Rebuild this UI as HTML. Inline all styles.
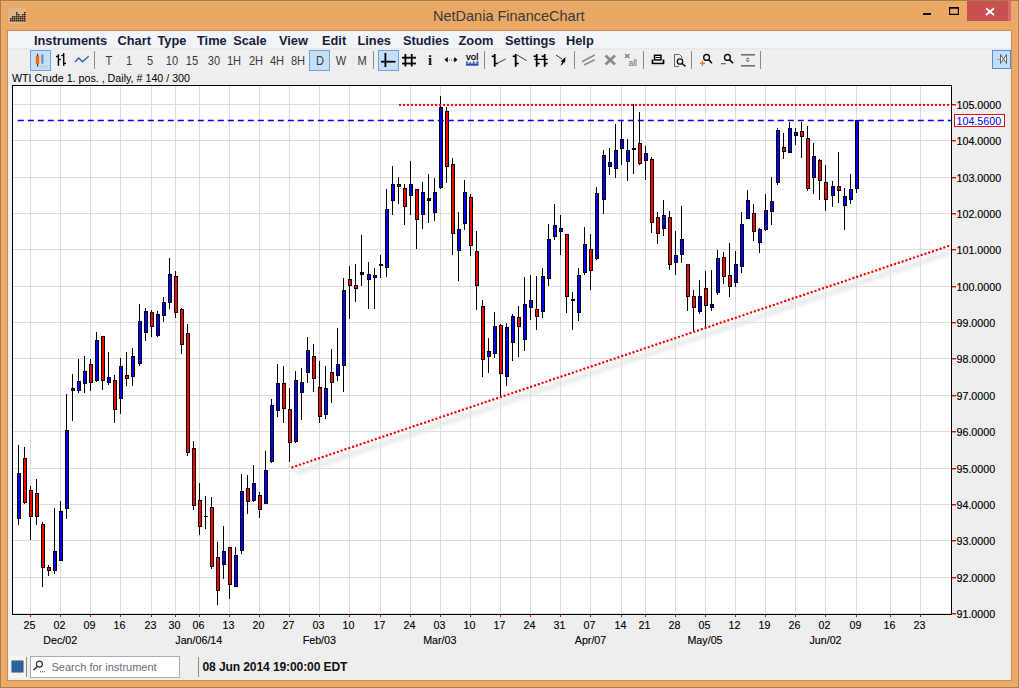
<!DOCTYPE html>
<html><head><meta charset="utf-8"><style>
html,body{margin:0;padding:0}
body{width:1019px;height:688px;position:relative;overflow:hidden;background:#EAA866;font-family:'Liberation Sans', sans-serif}
.a{position:absolute}
.menu span{position:absolute;top:3px;font-size:12.8px;font-weight:bold;color:#1B1B3A;white-space:nowrap}
.tb span{position:absolute;top:2.5px;font-size:13.5px;color:#3A3A3A;white-space:nowrap;transform:translateX(-50%) scaleX(0.82)}
</style></head><body>
<div class="a" style="left:0;top:0;width:1019px;height:688px;box-sizing:border-box;border:1px solid #AE7B48"></div>
<div class="a" style="left:1px;top:1px;width:1017px;height:686px;box-sizing:border-box;border:1px solid #E6AE74"></div>
<div class="a" style="left:2px;top:30px;width:2px;height:654px;background:#F0AE6A"></div>
<div class="a" style="left:1013px;top:30px;width:2px;height:654px;background:#F2A85E"></div>
<div class="a" style="left:2px;top:684px;width:1015px;height:2px;background:#F0AC66"></div>
<div class="a" style="left:7px;top:30px;width:1005px;height:651px;background:#CB8D55"></div>
<div class="a" style="left:2px;top:4px;width:1015px;height:1px;background:#EEB06C;opacity:0.6"></div>
<div class="a" style="left:2px;top:24px;width:965px;height:1px;background:#F0AC62;opacity:0.6"></div>
<div class="a" style="left:2px;top:27px;width:1015px;height:1px;background:#F2B26A;opacity:0.6"></div>
<div class="a" style="left:433px;top:8px;font-size:14.5px;color:#3A3A3A;white-space:nowrap">NetDania FinanceChart</div>
<div class="a" style="left:967px;top:1px;width:44px;height:20px;background:#D86A6A"></div><div class="a" style="left:967px;top:1px;width:41px;height:20px;background:#C75050"></div>
<svg class="a" style="left:0;top:0" width="1019" height="30">
<rect x="923" y="13" width="8" height="2" fill="#000"/>
<rect x="949.6" y="7.6" width="8.8" height="6.8" fill="none" stroke="#000" stroke-width="1.2"/>
<rect x="949" y="7" width="10" height="1.6" fill="#000"/>
<path d="M986 8.3 L994 15 M994 8.3 L986 15" stroke="#fff" stroke-width="1.9"/>
<rect x="8" y="8" width="1.5" height="1.5" fill="#C8D0D8" opacity="0.6"/>
<rect x="10" y="8" width="1.5" height="1.5" fill="#C8D0D8" opacity="0.6"/>
<rect x="12" y="8" width="1.5" height="1.5" fill="#C8D0D8" opacity="0.6"/>
<rect x="14" y="8" width="1.5" height="1.5" fill="#C8D0D8" opacity="0.6"/>
<rect x="16" y="8" width="1.5" height="1.5" fill="#C8D0D8" opacity="0.6"/>
<rect x="18" y="8" width="1.5" height="1.5" fill="#C8D0D8" opacity="0.6"/>
<rect x="20" y="8" width="1.5" height="1.5" fill="#C8D0D8" opacity="0.6"/>
<rect x="22" y="8" width="1.5" height="1.5" fill="#C8D0D8" opacity="0.6"/>
<rect x="24" y="8" width="1.5" height="1.5" fill="#C8D0D8" opacity="0.6"/>
<rect x="8" y="10" width="1.5" height="1.5" fill="#C8D0D8" opacity="0.6"/>
<rect x="10" y="10" width="1.5" height="1.5" fill="#C8D0D8" opacity="0.6"/>
<rect x="12" y="10" width="1.5" height="1.5" fill="#C8D0D8" opacity="0.6"/>
<rect x="14" y="10" width="1.5" height="1.5" fill="#C8D0D8" opacity="0.6"/>
<rect x="16" y="10" width="1.5" height="1.5" fill="#C8D0D8" opacity="0.6"/>
<rect x="18" y="10" width="1.5" height="1.5" fill="#C8D0D8" opacity="0.6"/>
<rect x="20" y="10" width="1.5" height="1.5" fill="#C8D0D8" opacity="0.6"/>
<rect x="22" y="10" width="1.5" height="1.5" fill="#C8D0D8" opacity="0.6"/>
<rect x="24" y="10" width="1.5" height="1.5" fill="#C8D0D8" opacity="0.6"/>
<rect x="8" y="12" width="1.5" height="1.5" fill="#C8D0D8" opacity="0.6"/>
<rect x="10" y="12" width="1.5" height="1.5" fill="#C8D0D8" opacity="0.6"/>
<rect x="12" y="12" width="1.5" height="1.5" fill="#C8D0D8" opacity="0.6"/>
<rect x="14" y="12" width="1.5" height="1.5" fill="#C8D0D8" opacity="0.6"/>
<rect x="16" y="12" width="1.5" height="1.5" fill="#1A2030"/>
<rect x="18" y="12" width="1.5" height="1.5" fill="#C8D0D8" opacity="0.6"/>
<rect x="20" y="12" width="1.5" height="1.5" fill="#C8D0D8" opacity="0.6"/>
<rect x="22" y="12" width="1.5" height="1.5" fill="#C8D0D8" opacity="0.6"/>
<rect x="24" y="12" width="1.5" height="1.5" fill="#1A2030"/>
<rect x="8" y="14" width="1.5" height="1.5" fill="#C8D0D8" opacity="0.6"/>
<rect x="10" y="14" width="1.5" height="1.5" fill="#C8D0D8" opacity="0.6"/>
<rect x="12" y="14" width="1.5" height="1.5" fill="#C8D0D8" opacity="0.6"/>
<rect x="14" y="14" width="1.5" height="1.5" fill="#C8D0D8" opacity="0.6"/>
<rect x="16" y="14" width="1.5" height="1.5" fill="#1A2030"/>
<rect x="18" y="14" width="1.5" height="1.5" fill="#1A2030"/>
<rect x="20" y="14" width="1.5" height="1.5" fill="#C8D0D8" opacity="0.6"/>
<rect x="22" y="14" width="1.5" height="1.5" fill="#1A2030"/>
<rect x="24" y="14" width="1.5" height="1.5" fill="#1A2030"/>
<rect x="8" y="16" width="1.5" height="1.5" fill="#C8D0D8" opacity="0.6"/>
<rect x="10" y="16" width="1.5" height="1.5" fill="#C8D0D8" opacity="0.6"/>
<rect x="12" y="16" width="1.5" height="1.5" fill="#1A2030"/>
<rect x="14" y="16" width="1.5" height="1.5" fill="#1A2030"/>
<rect x="16" y="16" width="1.5" height="1.5" fill="#1A2030"/>
<rect x="18" y="16" width="1.5" height="1.5" fill="#1A2030"/>
<rect x="20" y="16" width="1.5" height="1.5" fill="#1A2030"/>
<rect x="22" y="16" width="1.5" height="1.5" fill="#1A2030"/>
<rect x="24" y="16" width="1.5" height="1.5" fill="#1A2030"/>
<rect x="8" y="18" width="1.5" height="1.5" fill="#C8D0D8" opacity="0.6"/>
<rect x="10" y="18" width="1.5" height="1.5" fill="#1A2030"/>
<rect x="12" y="18" width="1.5" height="1.5" fill="#1A2030"/>
<rect x="14" y="18" width="1.5" height="1.5" fill="#1A2030"/>
<rect x="16" y="18" width="1.5" height="1.5" fill="#1A2030"/>
<rect x="18" y="18" width="1.5" height="1.5" fill="#1A2030"/>
<rect x="20" y="18" width="1.5" height="1.5" fill="#1A2030"/>
<rect x="22" y="18" width="1.5" height="1.5" fill="#1A2030"/>
<rect x="24" y="18" width="1.5" height="1.5" fill="#1A2030"/>
<rect x="8" y="20" width="1.5" height="1.5" fill="#C8D0D8" opacity="0.6"/>
<rect x="10" y="20" width="1.5" height="1.5" fill="#1A2030"/>
<rect x="12" y="20" width="1.5" height="1.5" fill="#1A2030"/>
<rect x="14" y="20" width="1.5" height="1.5" fill="#1A2030"/>
<rect x="16" y="20" width="1.5" height="1.5" fill="#1A2030"/>
<rect x="18" y="20" width="1.5" height="1.5" fill="#1A2030"/>
<rect x="20" y="20" width="1.5" height="1.5" fill="#1A2030"/>
<rect x="22" y="20" width="1.5" height="1.5" fill="#1A2030"/>
<rect x="24" y="20" width="1.5" height="1.5" fill="#1A2030"/>
<rect x="8" y="22" width="1.5" height="1.5" fill="#C8D0D8" opacity="0.6"/>
<rect x="10" y="22" width="1.5" height="1.5" fill="#C8D0D8" opacity="0.6"/>
<rect x="12" y="22" width="1.5" height="1.5" fill="#C8D0D8" opacity="0.6"/>
<rect x="14" y="22" width="1.5" height="1.5" fill="#C8D0D8" opacity="0.6"/>
<rect x="16" y="22" width="1.5" height="1.5" fill="#C8D0D8" opacity="0.6"/>
<rect x="18" y="22" width="1.5" height="1.5" fill="#C8D0D8" opacity="0.6"/>
<rect x="20" y="22" width="1.5" height="1.5" fill="#C8D0D8" opacity="0.6"/>
<rect x="22" y="22" width="1.5" height="1.5" fill="#C8D0D8" opacity="0.6"/>
<rect x="24" y="22" width="1.5" height="1.5" fill="#C8D0D8" opacity="0.6"/>
</svg>
<div class="a" style="left:8px;top:31px;width:1003px;height:649px;background:#EEEEEE"></div>
<div class="a" style="left:8px;top:31px;width:1003px;height:17px;background:#F1F4F8"></div>
<div class="a" style="left:8px;top:48px;width:1003px;height:2px;background:#EAEAEA"></div>
<div class="a" style="left:8px;top:50px;width:1003px;height:22px;background:#EFEFEF"></div>
<div class="a menu" style="left:0;top:30px;width:1019px;height:20px">
<span style="left:34px">Instruments</span>
<span style="left:117.5px">Chart<b style="display:inline-block;width:3px"></b> Type</span>
<span style="left:197px">Time<b style="display:inline-block;width:3px"></b> Scale</span>
<span style="left:279px">View</span>
<span style="left:322px">Edit</span>
<span style="left:357.5px">Lines</span>
<span style="left:403px">Studies</span>
<span style="left:458.5px">Zoom</span>
<span style="left:505px">Settings</span>
<span style="left:566px">Help</span>
</div>
<svg class="a" style="left:0;top:0;font-family:'Liberation Sans', sans-serif" width="1019" height="80">
<rect x="30.5" y="50.5" width="20" height="20" fill="#C4DFF8" stroke="#6EA2DC" stroke-width="1"/>
<rect x="309.5" y="50.5" width="20" height="20" fill="#C4DFF8" stroke="#6EA2DC" stroke-width="1"/>
<rect x="378.5" y="50.5" width="20" height="20" fill="#C4DFF8" stroke="#6EA2DC" stroke-width="1"/>
<rect x="992.5" y="50.5" width="18" height="18" fill="#C2DDF8" stroke="#4F8FDC" stroke-width="1"/>
<path d="M1000.5 54.5 L1006.5 63.5 L1006.5 54.5 L1000.5 63.5 Z" fill="#F4F4F0" stroke="#666" stroke-width="1"/>
<rect x="997" y="59" width="3" height="1" fill="#8AA"/>
<rect x="37" y="53.8" width="1.2" height="12.8" fill="#6A2A10"/>
<rect x="35.8" y="55.8" width="3.4" height="8.1" fill="#FF6600"/>
<path d="M41 54.5 L43.7 54.5 L43.5 63.7 L41.2 63.7 Z" fill="#7896B8"/>
<rect x="39.9" y="65" width="8" height="1.5" fill="#B8E0C8"/>
<rect x="39.9" y="66.5" width="8" height="1.7" fill="#C8C8F0"/>
<g fill="#000"><rect x="57.7" y="54.2" width="1.4" height="11.6"/><rect x="56" y="55.8" width="2" height="1.4"/><rect x="58.8" y="58.8" width="2" height="1.4"/><rect x="63" y="53" width="1.4" height="12.8"/><rect x="61.3" y="54.8" width="2" height="1.4"/><rect x="64" y="62.7" width="2" height="1.4"/></g>
<polyline points="75,62 78.7,58 82.4,61.7 88.7,56.3" fill="none" stroke="#3A5CC0" stroke-width="1.4"/>
<rect x="94" y="51" width="1" height="18" fill="#8A8A8A"/>
<rect x="373" y="51" width="1" height="18" fill="#8A8A8A"/>
<rect x="484" y="51" width="1" height="18" fill="#8A8A8A"/>
<rect x="574" y="51" width="1" height="18" fill="#8A8A8A"/>
<rect x="643" y="51" width="1" height="18" fill="#8A8A8A"/>
<rect x="691" y="51" width="1" height="18" fill="#8A8A8A"/>
<rect x="760" y="51" width="1" height="18" fill="#8A8A8A"/>
<rect x="384.5" y="53" width="1.8" height="14" fill="#000"/><rect x="381" y="60.8" width="14.5" height="1.8" fill="#000"/>
<g fill="#000"><rect x="404.5" y="54" width="1.8" height="12.5"/><rect x="410.8" y="54" width="1.8" height="12.5"/><rect x="402" y="56.8" width="14" height="1.8"/><rect x="402" y="62.6" width="14" height="1.8"/></g>
<text x="430" y="64.6" font-family="Liberation Serif" font-size="14.5" font-weight="bold" text-anchor="middle" fill="#111">i</text>
<path d="M444.5 59.7 L447.8 57 L447.8 62.4 Z M457.5 59.7 L454.2 57 L454.2 62.4 Z" fill="#000"/>
<g fill="#555"><rect x="449" y="59.5" width="1" height="1"/><rect x="451" y="59.5" width="1" height="1"/><rect x="453" y="59.5" width="1" height="1"/></g>
<text x="472.2" y="60" font-size="9.5" text-anchor="middle" fill="#000" stroke="#000" stroke-width="0.25">vol</text>
<g fill="#2B4FB0"><rect x="466" y="63.5" width="12.5" height="2.2"/><rect x="466" y="61.5" width="1.8" height="2"/><rect x="469.5" y="62" width="1.5" height="1.5"/><rect x="472.8" y="61.5" width="1.8" height="2"/><rect x="476.5" y="61.5" width="2" height="2"/></g>
<rect x="493.8" y="54" width="1.8" height="12.7" fill="#000"/><rect x="491.7" y="55.5" width="2.5" height="1.6" fill="#000"/><rect x="495.2" y="62.7" width="2.5" height="1.6" fill="#000"/>
<line x1="497" y1="63.5" x2="505.7" y2="59" stroke="#222" stroke-width="0.9"/>
<rect x="514.8000000000001" y="54" width="1.8" height="12.7" fill="#000"/><rect x="512.7" y="55.5" width="2.5" height="1.6" fill="#000"/><rect x="516.2" y="62.7" width="2.5" height="1.6" fill="#000"/>
<line x1="516.7" y1="54.7" x2="526.7" y2="60.7" stroke="#222" stroke-width="0.9"/>
<rect x="535.8000000000001" y="54" width="1.8" height="12.7" fill="#000"/><rect x="533.7" y="55.5" width="2.5" height="1.6" fill="#000"/><rect x="537.2" y="62.7" width="2.5" height="1.6" fill="#000"/>
<rect x="543.8000000000001" y="54" width="1.8" height="12.7" fill="#000"/><rect x="541.7" y="55.5" width="2.5" height="1.6" fill="#000"/><rect x="545.2" y="62.7" width="2.5" height="1.6" fill="#000"/>
<rect x="534.4" y="58.8" width="13.3" height="1.2" fill="#000"/>
<line x1="556" y1="55" x2="562" y2="59" stroke="#333" stroke-width="1"/>
<path d="M565.5 57 L560.5 61.5 L562.5 61.8 L560.3 65.8 L563 64 L563.5 62.2 L565 62.5 Z" fill="#000"/>
<line x1="582" y1="61.7" x2="594.7" y2="55" stroke="#8C8C8C" stroke-width="1.6"/>
<line x1="584" y1="65" x2="594.7" y2="59.7" stroke="#8C8C8C" stroke-width="1.6"/>
<path d="M605.5 55.5 L615 64.5 M615 55.5 L605.5 64.5" stroke="#8A8A8A" stroke-width="2.8"/>
<path d="M625 54 L629.5 58 M629.5 54 L625 58" stroke="#7A7A7A" stroke-width="1.3"/>
<text x="628.5" y="65.8" font-size="8.5" fill="#6A6A6A">all</text>
<rect x="654.5" y="55.3" width="6.5" height="4.6" fill="#fff" stroke="#000" stroke-width="1.5"/>
<path d="M652.5 59.5 L652.5 63.5 L663.5 63.5 L663.5 59.5" fill="none" stroke="#000" stroke-width="1.7"/>
<rect x="655.5" y="57" width="4.5" height="1" fill="#000"/>
<rect x="652" y="64.3" width="12" height="1" fill="#A8C8F0"/>
<path d="M674.5 54.5 L679.5 54.5 L682 57 L682 58 M674.5 54.5 L674.5 66.5 L679 66.5" fill="none" stroke="#666" stroke-width="1"/>
<circle cx="680" cy="61.5" r="2.7" fill="#F6F6F6" stroke="#111" stroke-width="1.3"/>
<line x1="682" y1="63.5" x2="685.5" y2="66.3" stroke="#111" stroke-width="1.6"/>
<circle cx="706.6" cy="57.4" r="2.9" fill="#F4F4F4" stroke="#111" stroke-width="1.4"/>
<line x1="708.8" y1="59.6" x2="712" y2="63.2" stroke="#111" stroke-width="1.6"/>
<path d="M702.4 60.8 L702.4 66 M699.8 63.4 L705 63.4" stroke="#F07020" stroke-width="1.4"/>
<circle cx="727.4" cy="57.4" r="2.9" fill="#F4F4F4" stroke="#111" stroke-width="1.4"/>
<line x1="729.6" y1="59.6" x2="733" y2="63.2" stroke="#111" stroke-width="1.6"/>
<rect x="721" y="63" width="4.8" height="1.3" fill="#4A6CC0"/>
<rect x="741" y="54" width="14" height="1.6" fill="#707070"/><rect x="741" y="65" width="14" height="1.6" fill="#707070"/>
<path d="M747.7 57.3 L745.5 59.3 L749.9 59.3 Z M747.7 62.3 L745.5 60.3 L749.9 60.3 Z" fill="#7A7A7A"/>
</svg>
<div class="a tb" style="left:0;top:50px;width:1019px;height:20px">
<span style="left:108.8px">T</span>
<span style="left:129.3px">1</span>
<span style="left:150px">5</span>
<span style="left:171.5px">10</span>
<span style="left:192.3px">15</span>
<span style="left:213.5px">30</span>
<span style="left:233.8px">1H</span>
<span style="left:255.5px">2H</span>
<span style="left:277px">4H</span>
<span style="left:298px">8H</span>
<span style="left:320.3px">D</span>
<span style="left:340.5px">W</span>
<span style="left:361.8px">M</span>
</div>
<div class="a" style="left:12px;top:72px;font-size:10.7px;color:#000;white-space:nowrap">WTI Crude 1. pos. , Daily, # 140 / 300</div>
<svg class="a" style="left:0;top:0;font-family:'Liberation Sans', sans-serif" width="1019" height="688">
<rect x="12" y="85" width="939" height="529" fill="#fff"/>
<rect x="12" y="613" width="939" height="1" fill="#DCDCDC"/>
<rect x="12" y="577" width="939" height="1" fill="#DCDCDC"/>
<rect x="12" y="540" width="939" height="1" fill="#DCDCDC"/>
<rect x="12" y="504" width="939" height="1" fill="#DCDCDC"/>
<rect x="12" y="468" width="939" height="1" fill="#DCDCDC"/>
<rect x="12" y="431" width="939" height="1" fill="#DCDCDC"/>
<rect x="12" y="395" width="939" height="1" fill="#DCDCDC"/>
<rect x="12" y="358" width="939" height="1" fill="#DCDCDC"/>
<rect x="12" y="322" width="939" height="1" fill="#DCDCDC"/>
<rect x="12" y="286" width="939" height="1" fill="#DCDCDC"/>
<rect x="12" y="249" width="939" height="1" fill="#DCDCDC"/>
<rect x="12" y="213" width="939" height="1" fill="#DCDCDC"/>
<rect x="12" y="177" width="939" height="1" fill="#DCDCDC"/>
<rect x="12" y="140" width="939" height="1" fill="#DCDCDC"/>
<rect x="12" y="104" width="939" height="1" fill="#DCDCDC"/>
<rect x="30" y="85" width="1" height="529" fill="#DCDCDC"/>
<rect x="60" y="85" width="1" height="529" fill="#DCDCDC"/>
<rect x="90" y="85" width="1" height="529" fill="#DCDCDC"/>
<rect x="120" y="85" width="1" height="529" fill="#DCDCDC"/>
<rect x="151" y="85" width="1" height="529" fill="#DCDCDC"/>
<rect x="175" y="85" width="1" height="529" fill="#DCDCDC"/>
<rect x="199" y="85" width="1" height="529" fill="#DCDCDC"/>
<rect x="229" y="85" width="1" height="529" fill="#DCDCDC"/>
<rect x="259" y="85" width="1" height="529" fill="#DCDCDC"/>
<rect x="289" y="85" width="1" height="529" fill="#DCDCDC"/>
<rect x="319" y="85" width="1" height="529" fill="#DCDCDC"/>
<rect x="349" y="85" width="1" height="529" fill="#DCDCDC"/>
<rect x="380" y="85" width="1" height="529" fill="#DCDCDC"/>
<rect x="410" y="85" width="1" height="529" fill="#DCDCDC"/>
<rect x="440" y="85" width="1" height="529" fill="#DCDCDC"/>
<rect x="470" y="85" width="1" height="529" fill="#DCDCDC"/>
<rect x="500" y="85" width="1" height="529" fill="#DCDCDC"/>
<rect x="530" y="85" width="1" height="529" fill="#DCDCDC"/>
<rect x="560" y="85" width="1" height="529" fill="#DCDCDC"/>
<rect x="590" y="85" width="1" height="529" fill="#DCDCDC"/>
<rect x="621" y="85" width="1" height="529" fill="#DCDCDC"/>
<rect x="645" y="85" width="1" height="529" fill="#DCDCDC"/>
<rect x="675" y="85" width="1" height="529" fill="#DCDCDC"/>
<rect x="705" y="85" width="1" height="529" fill="#DCDCDC"/>
<rect x="735" y="85" width="1" height="529" fill="#DCDCDC"/>
<rect x="765" y="85" width="1" height="529" fill="#DCDCDC"/>
<rect x="795" y="85" width="1" height="529" fill="#DCDCDC"/>
<rect x="825" y="85" width="1" height="529" fill="#DCDCDC"/>
<rect x="856" y="85" width="1" height="529" fill="#DCDCDC"/>
<rect x="890" y="85" width="1" height="529" fill="#DCDCDC"/>
<rect x="920" y="85" width="1" height="529" fill="#DCDCDC"/>
<filter id="bl" x="-5%" y="-50%" width="110%" height="200%"><feGaussianBlur stdDeviation="2"/></filter>
<line x1="296" y1="473" x2="951" y2="252" stroke="#E4E4E4" stroke-width="4" filter="url(#bl)"/>
<rect x="400" y="107" width="551" height="5" fill="#000" opacity="0.035"/>
<rect x="18" y="445" width="1" height="80" fill="#000"/>
<rect x="17" y="473" width="4" height="46" fill="#000"/>
<rect x="18" y="474" width="2" height="44" fill="#0000FF"/>
<rect x="24" y="447" width="1" height="57" fill="#000"/>
<rect x="23" y="458" width="4" height="45" fill="#000"/>
<rect x="24" y="459" width="2" height="43" fill="#FF0000"/>
<rect x="30" y="486" width="1" height="54" fill="#000"/>
<rect x="29" y="490" width="4" height="27" fill="#000"/>
<rect x="30" y="491" width="2" height="25" fill="#FF0000"/>
<rect x="36" y="479" width="1" height="46" fill="#000"/>
<rect x="35" y="493" width="4" height="24" fill="#000"/>
<rect x="36" y="494" width="2" height="22" fill="#FF0000"/>
<rect x="42" y="522" width="1" height="65" fill="#000"/>
<rect x="41" y="524" width="4" height="44" fill="#000"/>
<rect x="42" y="525" width="2" height="42" fill="#FF0000"/>
<rect x="48" y="565" width="1" height="11" fill="#000"/>
<rect x="47" y="567" width="4" height="4" fill="#000"/>
<rect x="48" y="568" width="2" height="2" fill="#FF0000"/>
<rect x="54" y="508" width="1" height="66" fill="#000"/>
<rect x="53" y="551" width="4" height="20" fill="#000"/>
<rect x="54" y="552" width="2" height="18" fill="#0000FF"/>
<rect x="60" y="501" width="1" height="60" fill="#000"/>
<rect x="59" y="511" width="4" height="50" fill="#000"/>
<rect x="60" y="512" width="2" height="48" fill="#0000FF"/>
<rect x="66" y="394" width="1" height="125" fill="#000"/>
<rect x="65" y="430" width="4" height="79" fill="#000"/>
<rect x="66" y="431" width="2" height="77" fill="#0000FF"/>
<rect x="72" y="374" width="1" height="47" fill="#000"/>
<rect x="71" y="388" width="4" height="3" fill="#000"/>
<rect x="72" y="389" width="2" height="1" fill="#0000FF"/>
<rect x="78" y="359" width="1" height="34" fill="#000"/>
<rect x="77" y="381" width="4" height="10" fill="#000"/>
<rect x="78" y="382" width="2" height="8" fill="#0000FF"/>
<rect x="84" y="356" width="1" height="37" fill="#000"/>
<rect x="83" y="371" width="4" height="13" fill="#000"/>
<rect x="84" y="372" width="2" height="11" fill="#0000FF"/>
<rect x="90" y="359" width="1" height="32" fill="#000"/>
<rect x="89" y="364" width="4" height="19" fill="#000"/>
<rect x="90" y="365" width="2" height="17" fill="#FF0000"/>
<rect x="96" y="332" width="1" height="50" fill="#000"/>
<rect x="95" y="340" width="4" height="41" fill="#000"/>
<rect x="96" y="341" width="2" height="39" fill="#0000FF"/>
<rect x="102" y="336" width="1" height="54" fill="#000"/>
<rect x="101" y="336" width="4" height="45" fill="#000"/>
<rect x="102" y="337" width="2" height="43" fill="#FF0000"/>
<rect x="108" y="352" width="1" height="33" fill="#000"/>
<rect x="107" y="377" width="4" height="6" fill="#000"/>
<rect x="108" y="378" width="2" height="4" fill="#0000FF"/>
<rect x="114" y="375" width="1" height="48" fill="#000"/>
<rect x="113" y="380" width="4" height="30" fill="#000"/>
<rect x="114" y="381" width="2" height="28" fill="#FF0000"/>
<rect x="120" y="358" width="1" height="56" fill="#000"/>
<rect x="119" y="366" width="4" height="33" fill="#000"/>
<rect x="120" y="367" width="2" height="31" fill="#0000FF"/>
<rect x="126" y="352" width="1" height="34" fill="#000"/>
<rect x="125" y="375" width="4" height="4" fill="#000"/>
<rect x="126" y="376" width="2" height="2" fill="#FF0000"/>
<rect x="132" y="348" width="1" height="38" fill="#000"/>
<rect x="131" y="356" width="4" height="21" fill="#000"/>
<rect x="132" y="357" width="2" height="19" fill="#0000FF"/>
<rect x="139" y="304" width="1" height="62" fill="#000"/>
<rect x="138" y="321" width="4" height="43" fill="#000"/>
<rect x="139" y="322" width="2" height="41" fill="#0000FF"/>
<rect x="145" y="308" width="1" height="33" fill="#000"/>
<rect x="144" y="311" width="4" height="22" fill="#000"/>
<rect x="145" y="312" width="2" height="20" fill="#0000FF"/>
<rect x="151" y="310" width="1" height="27" fill="#000"/>
<rect x="150" y="312" width="4" height="15" fill="#000"/>
<rect x="151" y="313" width="2" height="13" fill="#FF0000"/>
<rect x="157" y="311" width="1" height="26" fill="#000"/>
<rect x="156" y="314" width="4" height="22" fill="#000"/>
<rect x="157" y="315" width="2" height="20" fill="#0000FF"/>
<rect x="163" y="297" width="1" height="25" fill="#000"/>
<rect x="162" y="302" width="4" height="14" fill="#000"/>
<rect x="163" y="303" width="2" height="12" fill="#0000FF"/>
<rect x="169" y="258" width="1" height="51" fill="#000"/>
<rect x="168" y="274" width="4" height="29" fill="#000"/>
<rect x="169" y="275" width="2" height="27" fill="#0000FF"/>
<rect x="175" y="271" width="1" height="47" fill="#000"/>
<rect x="174" y="276" width="4" height="37" fill="#000"/>
<rect x="175" y="277" width="2" height="35" fill="#FF0000"/>
<rect x="181" y="308" width="1" height="46" fill="#000"/>
<rect x="180" y="309" width="4" height="36" fill="#000"/>
<rect x="181" y="310" width="2" height="34" fill="#FF0000"/>
<rect x="187" y="324" width="1" height="132" fill="#000"/>
<rect x="186" y="333" width="4" height="120" fill="#000"/>
<rect x="187" y="334" width="2" height="118" fill="#FF0000"/>
<rect x="193" y="441" width="1" height="69" fill="#000"/>
<rect x="192" y="448" width="4" height="58" fill="#000"/>
<rect x="193" y="449" width="2" height="56" fill="#FF0000"/>
<rect x="199" y="483" width="1" height="52" fill="#000"/>
<rect x="198" y="500" width="4" height="27" fill="#000"/>
<rect x="199" y="501" width="2" height="25" fill="#FF0000"/>
<rect x="205" y="496" width="1" height="33" fill="#000"/>
<rect x="204" y="516" width="4" height="1" fill="#000"/>
<rect x="211" y="497" width="1" height="72" fill="#000"/>
<rect x="210" y="507" width="4" height="60" fill="#000"/>
<rect x="211" y="508" width="2" height="58" fill="#FF0000"/>
<rect x="217" y="542" width="1" height="63" fill="#000"/>
<rect x="216" y="557" width="4" height="34" fill="#000"/>
<rect x="217" y="558" width="2" height="32" fill="#FF0000"/>
<rect x="223" y="526" width="1" height="53" fill="#000"/>
<rect x="222" y="551" width="4" height="14" fill="#000"/>
<rect x="223" y="552" width="2" height="12" fill="#0000FF"/>
<rect x="229" y="547" width="1" height="52" fill="#000"/>
<rect x="228" y="547" width="4" height="38" fill="#000"/>
<rect x="229" y="548" width="2" height="36" fill="#FF0000"/>
<rect x="235" y="547" width="1" height="40" fill="#000"/>
<rect x="234" y="555" width="4" height="32" fill="#000"/>
<rect x="235" y="556" width="2" height="30" fill="#0000FF"/>
<rect x="241" y="474" width="1" height="80" fill="#000"/>
<rect x="240" y="491" width="4" height="60" fill="#000"/>
<rect x="241" y="492" width="2" height="58" fill="#0000FF"/>
<rect x="247" y="475" width="1" height="39" fill="#000"/>
<rect x="246" y="488" width="4" height="14" fill="#000"/>
<rect x="247" y="489" width="2" height="12" fill="#FF0000"/>
<rect x="253" y="465" width="1" height="37" fill="#000"/>
<rect x="252" y="483" width="4" height="18" fill="#000"/>
<rect x="253" y="484" width="2" height="16" fill="#0000FF"/>
<rect x="259" y="492" width="1" height="26" fill="#000"/>
<rect x="258" y="495" width="4" height="15" fill="#000"/>
<rect x="259" y="496" width="2" height="13" fill="#FF0000"/>
<rect x="265" y="451" width="1" height="53" fill="#000"/>
<rect x="264" y="470" width="4" height="34" fill="#000"/>
<rect x="265" y="471" width="2" height="32" fill="#0000FF"/>
<rect x="271" y="399" width="1" height="64" fill="#000"/>
<rect x="270" y="405" width="4" height="57" fill="#000"/>
<rect x="271" y="406" width="2" height="55" fill="#0000FF"/>
<rect x="277" y="364" width="1" height="53" fill="#000"/>
<rect x="276" y="383" width="4" height="28" fill="#000"/>
<rect x="277" y="384" width="2" height="26" fill="#0000FF"/>
<rect x="283" y="366" width="1" height="57" fill="#000"/>
<rect x="282" y="383" width="4" height="26" fill="#000"/>
<rect x="283" y="384" width="2" height="24" fill="#FF0000"/>
<rect x="289" y="388" width="1" height="74" fill="#000"/>
<rect x="288" y="409" width="4" height="34" fill="#000"/>
<rect x="289" y="410" width="2" height="32" fill="#FF0000"/>
<rect x="295" y="371" width="1" height="72" fill="#000"/>
<rect x="294" y="380" width="4" height="62" fill="#000"/>
<rect x="295" y="381" width="2" height="60" fill="#0000FF"/>
<rect x="301" y="368" width="1" height="52" fill="#000"/>
<rect x="300" y="382" width="4" height="11" fill="#000"/>
<rect x="301" y="383" width="2" height="9" fill="#0000FF"/>
<rect x="307" y="337" width="1" height="46" fill="#000"/>
<rect x="306" y="350" width="4" height="23" fill="#000"/>
<rect x="307" y="351" width="2" height="21" fill="#0000FF"/>
<rect x="313" y="344" width="1" height="48" fill="#000"/>
<rect x="312" y="356" width="4" height="23" fill="#000"/>
<rect x="313" y="357" width="2" height="21" fill="#FF0000"/>
<rect x="319" y="361" width="1" height="62" fill="#000"/>
<rect x="318" y="387" width="4" height="30" fill="#000"/>
<rect x="319" y="388" width="2" height="28" fill="#FF0000"/>
<rect x="325" y="366" width="1" height="53" fill="#000"/>
<rect x="324" y="388" width="4" height="27" fill="#000"/>
<rect x="325" y="389" width="2" height="25" fill="#0000FF"/>
<rect x="331" y="349" width="1" height="54" fill="#000"/>
<rect x="330" y="372" width="4" height="11" fill="#000"/>
<rect x="331" y="373" width="2" height="9" fill="#FF0000"/>
<rect x="337" y="328" width="1" height="53" fill="#000"/>
<rect x="336" y="364" width="4" height="12" fill="#000"/>
<rect x="337" y="365" width="2" height="10" fill="#0000FF"/>
<rect x="343" y="278" width="1" height="114" fill="#000"/>
<rect x="342" y="290" width="4" height="76" fill="#000"/>
<rect x="343" y="291" width="2" height="74" fill="#0000FF"/>
<rect x="349" y="266" width="1" height="53" fill="#000"/>
<rect x="348" y="279" width="4" height="7" fill="#000"/>
<rect x="349" y="280" width="2" height="5" fill="#FF0000"/>
<rect x="355" y="264" width="1" height="38" fill="#000"/>
<rect x="354" y="285" width="4" height="4" fill="#000"/>
<rect x="355" y="286" width="2" height="2" fill="#FF0000"/>
<rect x="361" y="235" width="1" height="51" fill="#000"/>
<rect x="360" y="272" width="4" height="3" fill="#000"/>
<rect x="368" y="262" width="1" height="47" fill="#000"/>
<rect x="367" y="274" width="4" height="6" fill="#000"/>
<rect x="368" y="275" width="2" height="4" fill="#0000FF"/>
<rect x="374" y="268" width="1" height="41" fill="#000"/>
<rect x="373" y="275" width="4" height="3" fill="#000"/>
<rect x="374" y="276" width="2" height="1" fill="#0000FF"/>
<rect x="380" y="255" width="1" height="23" fill="#000"/>
<rect x="379" y="264" width="4" height="2" fill="#000"/>
<rect x="386" y="189" width="1" height="88" fill="#000"/>
<rect x="385" y="209" width="4" height="59" fill="#000"/>
<rect x="386" y="210" width="2" height="57" fill="#0000FF"/>
<rect x="392" y="166" width="1" height="49" fill="#000"/>
<rect x="391" y="184" width="4" height="17" fill="#000"/>
<rect x="392" y="185" width="2" height="15" fill="#0000FF"/>
<rect x="398" y="177" width="1" height="27" fill="#000"/>
<rect x="397" y="184" width="4" height="3" fill="#000"/>
<rect x="398" y="185" width="2" height="1" fill="#FF0000"/>
<rect x="404" y="184" width="1" height="41" fill="#000"/>
<rect x="403" y="188" width="4" height="19" fill="#000"/>
<rect x="404" y="189" width="2" height="17" fill="#FF0000"/>
<rect x="410" y="161" width="1" height="54" fill="#000"/>
<rect x="409" y="184" width="4" height="12" fill="#000"/>
<rect x="410" y="185" width="2" height="10" fill="#0000FF"/>
<rect x="416" y="189" width="1" height="60" fill="#000"/>
<rect x="415" y="189" width="4" height="31" fill="#000"/>
<rect x="416" y="190" width="2" height="29" fill="#FF0000"/>
<rect x="422" y="182" width="1" height="47" fill="#000"/>
<rect x="421" y="192" width="4" height="23" fill="#000"/>
<rect x="422" y="193" width="2" height="21" fill="#0000FF"/>
<rect x="428" y="174" width="1" height="49" fill="#000"/>
<rect x="427" y="198" width="4" height="3" fill="#000"/>
<rect x="434" y="178" width="1" height="43" fill="#000"/>
<rect x="433" y="192" width="4" height="21" fill="#000"/>
<rect x="434" y="193" width="2" height="19" fill="#0000FF"/>
<rect x="440" y="96" width="1" height="93" fill="#000"/>
<rect x="439" y="107" width="4" height="81" fill="#000"/>
<rect x="440" y="108" width="2" height="79" fill="#0000FF"/>
<rect x="446" y="107" width="1" height="76" fill="#000"/>
<rect x="445" y="111" width="4" height="56" fill="#000"/>
<rect x="446" y="112" width="2" height="54" fill="#FF0000"/>
<rect x="452" y="158" width="1" height="97" fill="#000"/>
<rect x="451" y="164" width="4" height="70" fill="#000"/>
<rect x="452" y="165" width="2" height="68" fill="#FF0000"/>
<rect x="458" y="212" width="1" height="69" fill="#000"/>
<rect x="457" y="229" width="4" height="22" fill="#000"/>
<rect x="458" y="230" width="2" height="20" fill="#0000FF"/>
<rect x="464" y="180" width="1" height="50" fill="#000"/>
<rect x="463" y="192" width="4" height="32" fill="#000"/>
<rect x="464" y="193" width="2" height="30" fill="#0000FF"/>
<rect x="470" y="194" width="1" height="62" fill="#000"/>
<rect x="469" y="197" width="4" height="49" fill="#000"/>
<rect x="470" y="198" width="2" height="47" fill="#FF0000"/>
<rect x="476" y="231" width="1" height="79" fill="#000"/>
<rect x="475" y="251" width="4" height="35" fill="#000"/>
<rect x="476" y="252" width="2" height="33" fill="#FF0000"/>
<rect x="482" y="300" width="1" height="77" fill="#000"/>
<rect x="481" y="306" width="4" height="54" fill="#000"/>
<rect x="482" y="307" width="2" height="52" fill="#FF0000"/>
<rect x="488" y="338" width="1" height="35" fill="#000"/>
<rect x="487" y="351" width="4" height="6" fill="#000"/>
<rect x="488" y="352" width="2" height="4" fill="#0000FF"/>
<rect x="494" y="312" width="1" height="46" fill="#000"/>
<rect x="493" y="326" width="4" height="28" fill="#000"/>
<rect x="494" y="327" width="2" height="26" fill="#0000FF"/>
<rect x="500" y="324" width="1" height="73" fill="#000"/>
<rect x="499" y="325" width="4" height="49" fill="#000"/>
<rect x="500" y="326" width="2" height="47" fill="#FF0000"/>
<rect x="506" y="323" width="1" height="63" fill="#000"/>
<rect x="505" y="327" width="4" height="50" fill="#000"/>
<rect x="506" y="328" width="2" height="48" fill="#0000FF"/>
<rect x="512" y="314" width="1" height="47" fill="#000"/>
<rect x="511" y="316" width="4" height="27" fill="#000"/>
<rect x="512" y="317" width="2" height="25" fill="#0000FF"/>
<rect x="518" y="306" width="1" height="51" fill="#000"/>
<rect x="517" y="317" width="4" height="10" fill="#000"/>
<rect x="518" y="318" width="2" height="8" fill="#FF0000"/>
<rect x="524" y="277" width="1" height="74" fill="#000"/>
<rect x="523" y="304" width="4" height="36" fill="#000"/>
<rect x="524" y="305" width="2" height="34" fill="#0000FF"/>
<rect x="530" y="275" width="1" height="45" fill="#000"/>
<rect x="529" y="300" width="4" height="8" fill="#000"/>
<rect x="530" y="301" width="2" height="6" fill="#0000FF"/>
<rect x="536" y="276" width="1" height="54" fill="#000"/>
<rect x="535" y="309" width="4" height="8" fill="#000"/>
<rect x="536" y="310" width="2" height="6" fill="#FF0000"/>
<rect x="542" y="268" width="1" height="50" fill="#000"/>
<rect x="541" y="276" width="4" height="36" fill="#000"/>
<rect x="542" y="277" width="2" height="34" fill="#0000FF"/>
<rect x="548" y="224" width="1" height="62" fill="#000"/>
<rect x="547" y="239" width="4" height="40" fill="#000"/>
<rect x="548" y="240" width="2" height="38" fill="#0000FF"/>
<rect x="554" y="204" width="1" height="36" fill="#000"/>
<rect x="553" y="225" width="4" height="12" fill="#000"/>
<rect x="554" y="226" width="2" height="10" fill="#0000FF"/>
<rect x="560" y="215" width="1" height="40" fill="#000"/>
<rect x="559" y="228" width="4" height="4" fill="#000"/>
<rect x="560" y="229" width="2" height="2" fill="#0000FF"/>
<rect x="566" y="234" width="1" height="79" fill="#000"/>
<rect x="565" y="234" width="4" height="63" fill="#000"/>
<rect x="566" y="235" width="2" height="61" fill="#FF0000"/>
<rect x="572" y="292" width="1" height="38" fill="#000"/>
<rect x="571" y="299" width="4" height="2" fill="#000"/>
<rect x="578" y="268" width="1" height="53" fill="#000"/>
<rect x="577" y="275" width="4" height="38" fill="#000"/>
<rect x="578" y="276" width="2" height="36" fill="#0000FF"/>
<rect x="584" y="227" width="1" height="48" fill="#000"/>
<rect x="583" y="244" width="4" height="29" fill="#000"/>
<rect x="584" y="245" width="2" height="27" fill="#0000FF"/>
<rect x="590" y="234" width="1" height="56" fill="#000"/>
<rect x="589" y="249" width="4" height="22" fill="#000"/>
<rect x="590" y="250" width="2" height="20" fill="#FF0000"/>
<rect x="596" y="187" width="1" height="73" fill="#000"/>
<rect x="595" y="193" width="4" height="66" fill="#000"/>
<rect x="596" y="194" width="2" height="64" fill="#0000FF"/>
<rect x="603" y="150" width="1" height="64" fill="#000"/>
<rect x="602" y="155" width="4" height="45" fill="#000"/>
<rect x="603" y="156" width="2" height="43" fill="#0000FF"/>
<rect x="609" y="148" width="1" height="27" fill="#000"/>
<rect x="608" y="162" width="4" height="5" fill="#000"/>
<rect x="609" y="163" width="2" height="3" fill="#0000FF"/>
<rect x="615" y="124" width="1" height="54" fill="#000"/>
<rect x="614" y="150" width="4" height="19" fill="#000"/>
<rect x="615" y="151" width="2" height="17" fill="#0000FF"/>
<rect x="621" y="120" width="1" height="45" fill="#000"/>
<rect x="620" y="139" width="4" height="10" fill="#000"/>
<rect x="621" y="140" width="2" height="8" fill="#0000FF"/>
<rect x="627" y="139" width="1" height="42" fill="#000"/>
<rect x="626" y="150" width="4" height="12" fill="#000"/>
<rect x="627" y="151" width="2" height="10" fill="#0000FF"/>
<rect x="633" y="104" width="1" height="70" fill="#000"/>
<rect x="632" y="148" width="4" height="2" fill="#000"/>
<rect x="639" y="112" width="1" height="53" fill="#000"/>
<rect x="638" y="143" width="4" height="21" fill="#000"/>
<rect x="639" y="144" width="2" height="19" fill="#FF0000"/>
<rect x="645" y="146" width="1" height="34" fill="#000"/>
<rect x="644" y="153" width="4" height="8" fill="#000"/>
<rect x="645" y="154" width="2" height="6" fill="#0000FF"/>
<rect x="651" y="157" width="1" height="76" fill="#000"/>
<rect x="650" y="159" width="4" height="64" fill="#000"/>
<rect x="651" y="160" width="2" height="62" fill="#FF0000"/>
<rect x="657" y="212" width="1" height="32" fill="#000"/>
<rect x="656" y="217" width="4" height="17" fill="#000"/>
<rect x="657" y="218" width="2" height="15" fill="#FF0000"/>
<rect x="663" y="200" width="1" height="36" fill="#000"/>
<rect x="662" y="215" width="4" height="14" fill="#000"/>
<rect x="663" y="216" width="2" height="12" fill="#0000FF"/>
<rect x="669" y="211" width="1" height="59" fill="#000"/>
<rect x="668" y="217" width="4" height="48" fill="#000"/>
<rect x="669" y="218" width="2" height="46" fill="#FF0000"/>
<rect x="675" y="231" width="1" height="44" fill="#000"/>
<rect x="674" y="255" width="4" height="8" fill="#000"/>
<rect x="675" y="256" width="2" height="6" fill="#0000FF"/>
<rect x="681" y="206" width="1" height="57" fill="#000"/>
<rect x="680" y="239" width="4" height="16" fill="#000"/>
<rect x="681" y="240" width="2" height="14" fill="#0000FF"/>
<rect x="687" y="264" width="1" height="47" fill="#000"/>
<rect x="686" y="264" width="4" height="33" fill="#000"/>
<rect x="687" y="265" width="2" height="31" fill="#FF0000"/>
<rect x="693" y="290" width="1" height="42" fill="#000"/>
<rect x="692" y="296" width="4" height="12" fill="#000"/>
<rect x="693" y="297" width="2" height="10" fill="#FF0000"/>
<rect x="699" y="280" width="1" height="34" fill="#000"/>
<rect x="698" y="296" width="4" height="16" fill="#000"/>
<rect x="699" y="297" width="2" height="14" fill="#0000FF"/>
<rect x="705" y="271" width="1" height="58" fill="#000"/>
<rect x="704" y="288" width="4" height="18" fill="#000"/>
<rect x="705" y="289" width="2" height="16" fill="#FF0000"/>
<rect x="711" y="270" width="1" height="41" fill="#000"/>
<rect x="710" y="304" width="4" height="4" fill="#000"/>
<rect x="711" y="305" width="2" height="2" fill="#0000FF"/>
<rect x="717" y="250" width="1" height="45" fill="#000"/>
<rect x="716" y="258" width="4" height="35" fill="#000"/>
<rect x="717" y="259" width="2" height="33" fill="#0000FF"/>
<rect x="723" y="252" width="1" height="32" fill="#000"/>
<rect x="722" y="257" width="4" height="20" fill="#000"/>
<rect x="723" y="258" width="2" height="18" fill="#FF0000"/>
<rect x="729" y="243" width="1" height="54" fill="#000"/>
<rect x="728" y="275" width="4" height="12" fill="#000"/>
<rect x="729" y="276" width="2" height="10" fill="#FF0000"/>
<rect x="735" y="251" width="1" height="36" fill="#000"/>
<rect x="734" y="264" width="4" height="19" fill="#000"/>
<rect x="735" y="265" width="2" height="17" fill="#0000FF"/>
<rect x="741" y="212" width="1" height="61" fill="#000"/>
<rect x="740" y="224" width="4" height="43" fill="#000"/>
<rect x="741" y="225" width="2" height="41" fill="#0000FF"/>
<rect x="747" y="190" width="1" height="29" fill="#000"/>
<rect x="746" y="200" width="4" height="19" fill="#000"/>
<rect x="747" y="201" width="2" height="17" fill="#0000FF"/>
<rect x="753" y="204" width="1" height="37" fill="#000"/>
<rect x="752" y="213" width="4" height="19" fill="#000"/>
<rect x="753" y="214" width="2" height="17" fill="#FF0000"/>
<rect x="759" y="228" width="1" height="25" fill="#000"/>
<rect x="758" y="229" width="4" height="14" fill="#000"/>
<rect x="759" y="230" width="2" height="12" fill="#0000FF"/>
<rect x="765" y="194" width="1" height="37" fill="#000"/>
<rect x="764" y="210" width="4" height="20" fill="#000"/>
<rect x="765" y="211" width="2" height="18" fill="#0000FF"/>
<rect x="771" y="177" width="1" height="48" fill="#000"/>
<rect x="770" y="201" width="4" height="11" fill="#000"/>
<rect x="771" y="202" width="2" height="9" fill="#0000FF"/>
<rect x="777" y="128" width="1" height="57" fill="#000"/>
<rect x="776" y="130" width="4" height="53" fill="#000"/>
<rect x="777" y="131" width="2" height="51" fill="#0000FF"/>
<rect x="783" y="133" width="1" height="26" fill="#000"/>
<rect x="782" y="147" width="4" height="5" fill="#000"/>
<rect x="783" y="148" width="2" height="3" fill="#FF0000"/>
<rect x="789" y="122" width="1" height="31" fill="#000"/>
<rect x="788" y="128" width="4" height="25" fill="#000"/>
<rect x="789" y="129" width="2" height="23" fill="#0000FF"/>
<rect x="795" y="128" width="1" height="17" fill="#000"/>
<rect x="794" y="132" width="4" height="4" fill="#000"/>
<rect x="795" y="133" width="2" height="2" fill="#0000FF"/>
<rect x="801" y="122" width="1" height="36" fill="#000"/>
<rect x="800" y="131" width="4" height="6" fill="#000"/>
<rect x="801" y="132" width="2" height="4" fill="#FF0000"/>
<rect x="807" y="126" width="1" height="65" fill="#000"/>
<rect x="806" y="138" width="4" height="51" fill="#000"/>
<rect x="807" y="139" width="2" height="49" fill="#FF0000"/>
<rect x="813" y="143" width="1" height="51" fill="#000"/>
<rect x="812" y="156" width="4" height="22" fill="#000"/>
<rect x="813" y="157" width="2" height="20" fill="#0000FF"/>
<rect x="819" y="159" width="1" height="41" fill="#000"/>
<rect x="818" y="160" width="4" height="21" fill="#000"/>
<rect x="819" y="161" width="2" height="19" fill="#FF0000"/>
<rect x="825" y="165" width="1" height="46" fill="#000"/>
<rect x="824" y="182" width="4" height="18" fill="#000"/>
<rect x="825" y="183" width="2" height="16" fill="#FF0000"/>
<rect x="832" y="181" width="1" height="26" fill="#000"/>
<rect x="831" y="186" width="4" height="10" fill="#000"/>
<rect x="832" y="187" width="2" height="8" fill="#0000FF"/>
<rect x="838" y="152" width="1" height="51" fill="#000"/>
<rect x="837" y="186" width="4" height="5" fill="#000"/>
<rect x="838" y="187" width="2" height="3" fill="#FF0000"/>
<rect x="844" y="188" width="1" height="42" fill="#000"/>
<rect x="843" y="196" width="4" height="10" fill="#000"/>
<rect x="844" y="197" width="2" height="8" fill="#0000FF"/>
<rect x="850" y="174" width="1" height="30" fill="#000"/>
<rect x="849" y="189" width="4" height="11" fill="#000"/>
<rect x="850" y="190" width="2" height="9" fill="#0000FF"/>
<rect x="856" y="120" width="1" height="73" fill="#000"/>
<rect x="855" y="120" width="4" height="69" fill="#000"/>
<rect x="856" y="121" width="2" height="67" fill="#0000FF"/>
<line x1="400" y1="105" x2="951" y2="105" stroke="#FF0000" stroke-width="2.3" stroke-linecap="round" stroke-dasharray="0 4"/>
<line x1="17.8" y1="120.5" x2="951" y2="120.5" stroke="#0000FF" stroke-width="1.5" stroke-dasharray="6 4"/>
<line x1="292.4" y1="467.2" x2="948.5" y2="246" stroke="#FF0000" stroke-width="2.4" stroke-linecap="round" stroke-dasharray="0 4"/>
<rect x="12.5" y="85.5" width="939" height="529" fill="none" stroke="#000" stroke-width="1"/>
<rect x="952" y="613" width="4" height="1.4" fill="#FF0000"/>
<text x="956.5" y="618.0" font-size="10.7" fill="#000" stroke="#000" stroke-width="0.15">91.0000</text>
<rect x="952" y="577" width="4" height="1.4" fill="#FF0000"/>
<text x="956.5" y="582.0" font-size="10.7" fill="#000" stroke="#000" stroke-width="0.15">92.0000</text>
<rect x="952" y="540" width="4" height="1.4" fill="#FF0000"/>
<text x="956.5" y="545.0" font-size="10.7" fill="#000" stroke="#000" stroke-width="0.15">93.0000</text>
<rect x="952" y="504" width="4" height="1.4" fill="#FF0000"/>
<text x="956.5" y="509.0" font-size="10.7" fill="#000" stroke="#000" stroke-width="0.15">94.0000</text>
<rect x="952" y="468" width="4" height="1.4" fill="#FF0000"/>
<text x="956.5" y="473.0" font-size="10.7" fill="#000" stroke="#000" stroke-width="0.15">95.0000</text>
<rect x="952" y="431" width="4" height="1.4" fill="#FF0000"/>
<text x="956.5" y="436.0" font-size="10.7" fill="#000" stroke="#000" stroke-width="0.15">96.0000</text>
<rect x="952" y="395" width="4" height="1.4" fill="#FF0000"/>
<text x="956.5" y="400.0" font-size="10.7" fill="#000" stroke="#000" stroke-width="0.15">97.0000</text>
<rect x="952" y="358" width="4" height="1.4" fill="#FF0000"/>
<text x="956.5" y="363.0" font-size="10.7" fill="#000" stroke="#000" stroke-width="0.15">98.0000</text>
<rect x="952" y="322" width="4" height="1.4" fill="#FF0000"/>
<text x="956.5" y="327.0" font-size="10.7" fill="#000" stroke="#000" stroke-width="0.15">99.0000</text>
<rect x="952" y="286" width="4" height="1.4" fill="#FF0000"/>
<text x="956.5" y="291.0" font-size="10.7" fill="#000" stroke="#000" stroke-width="0.15">100.0000</text>
<rect x="952" y="249" width="4" height="1.4" fill="#FF0000"/>
<text x="956.5" y="254.0" font-size="10.7" fill="#000" stroke="#000" stroke-width="0.15">101.0000</text>
<rect x="952" y="213" width="4" height="1.4" fill="#FF0000"/>
<text x="956.5" y="218.0" font-size="10.7" fill="#000" stroke="#000" stroke-width="0.15">102.0000</text>
<rect x="952" y="177" width="4" height="1.4" fill="#FF0000"/>
<text x="956.5" y="182.0" font-size="10.7" fill="#000" stroke="#000" stroke-width="0.15">103.0000</text>
<rect x="952" y="140" width="4" height="1.4" fill="#FF0000"/>
<text x="956.5" y="145.0" font-size="10.7" fill="#000" stroke="#000" stroke-width="0.15">104.0000</text>
<rect x="952" y="104" width="4" height="1.4" fill="#FF0000"/>
<text x="956.5" y="109.0" font-size="10.7" fill="#000" stroke="#000" stroke-width="0.15">105.0000</text>
<rect x="954.5" y="114.5" width="50" height="12" fill="#fff" stroke="#FF0000" stroke-width="1"/>
<text x="956.5" y="124.5" font-size="10.7" fill="#0000FF">104.5600</text>
<rect x="30" y="615" width="1" height="2" fill="#E00010"/>
<text x="29.5" y="628.7" font-size="10.7" text-anchor="middle" fill="#000" stroke="#000" stroke-width="0.12">25</text>
<rect x="60" y="615" width="1" height="2" fill="#E00010"/>
<text x="59.5" y="628.7" font-size="10.7" text-anchor="middle" fill="#000" stroke="#000" stroke-width="0.12">02</text>
<rect x="90" y="615" width="1" height="2" fill="#E00010"/>
<text x="89.5" y="628.7" font-size="10.7" text-anchor="middle" fill="#000" stroke="#000" stroke-width="0.12">09</text>
<rect x="120" y="615" width="1" height="2" fill="#E00010"/>
<text x="119.5" y="628.7" font-size="10.7" text-anchor="middle" fill="#000" stroke="#000" stroke-width="0.12">16</text>
<rect x="151" y="615" width="1" height="2" fill="#E00010"/>
<text x="150.5" y="628.7" font-size="10.7" text-anchor="middle" fill="#000" stroke="#000" stroke-width="0.12">23</text>
<rect x="175" y="615" width="1" height="2" fill="#E00010"/>
<text x="174.5" y="628.7" font-size="10.7" text-anchor="middle" fill="#000" stroke="#000" stroke-width="0.12">30</text>
<rect x="199" y="615" width="1" height="2" fill="#E00010"/>
<text x="198.5" y="628.7" font-size="10.7" text-anchor="middle" fill="#000" stroke="#000" stroke-width="0.12">06</text>
<rect x="229" y="615" width="1" height="2" fill="#E00010"/>
<text x="228.5" y="628.7" font-size="10.7" text-anchor="middle" fill="#000" stroke="#000" stroke-width="0.12">13</text>
<rect x="259" y="615" width="1" height="2" fill="#E00010"/>
<text x="258.5" y="628.7" font-size="10.7" text-anchor="middle" fill="#000" stroke="#000" stroke-width="0.12">20</text>
<rect x="289" y="615" width="1" height="2" fill="#E00010"/>
<text x="288.5" y="628.7" font-size="10.7" text-anchor="middle" fill="#000" stroke="#000" stroke-width="0.12">27</text>
<rect x="319" y="615" width="1" height="2" fill="#E00010"/>
<text x="318.5" y="628.7" font-size="10.7" text-anchor="middle" fill="#000" stroke="#000" stroke-width="0.12">03</text>
<rect x="349" y="615" width="1" height="2" fill="#E00010"/>
<text x="348.5" y="628.7" font-size="10.7" text-anchor="middle" fill="#000" stroke="#000" stroke-width="0.12">10</text>
<rect x="380" y="615" width="1" height="2" fill="#E00010"/>
<text x="379.5" y="628.7" font-size="10.7" text-anchor="middle" fill="#000" stroke="#000" stroke-width="0.12">17</text>
<rect x="410" y="615" width="1" height="2" fill="#E00010"/>
<text x="409.5" y="628.7" font-size="10.7" text-anchor="middle" fill="#000" stroke="#000" stroke-width="0.12">24</text>
<rect x="440" y="615" width="1" height="2" fill="#E00010"/>
<text x="439.5" y="628.7" font-size="10.7" text-anchor="middle" fill="#000" stroke="#000" stroke-width="0.12">03</text>
<rect x="470" y="615" width="1" height="2" fill="#E00010"/>
<text x="469.5" y="628.7" font-size="10.7" text-anchor="middle" fill="#000" stroke="#000" stroke-width="0.12">10</text>
<rect x="500" y="615" width="1" height="2" fill="#E00010"/>
<text x="499.5" y="628.7" font-size="10.7" text-anchor="middle" fill="#000" stroke="#000" stroke-width="0.12">17</text>
<rect x="530" y="615" width="1" height="2" fill="#E00010"/>
<text x="529.5" y="628.7" font-size="10.7" text-anchor="middle" fill="#000" stroke="#000" stroke-width="0.12">24</text>
<rect x="560" y="615" width="1" height="2" fill="#E00010"/>
<text x="559.5" y="628.7" font-size="10.7" text-anchor="middle" fill="#000" stroke="#000" stroke-width="0.12">31</text>
<rect x="590" y="615" width="1" height="2" fill="#E00010"/>
<text x="589.5" y="628.7" font-size="10.7" text-anchor="middle" fill="#000" stroke="#000" stroke-width="0.12">07</text>
<rect x="621" y="615" width="1" height="2" fill="#E00010"/>
<text x="620.5" y="628.7" font-size="10.7" text-anchor="middle" fill="#000" stroke="#000" stroke-width="0.12">14</text>
<rect x="645" y="615" width="1" height="2" fill="#E00010"/>
<text x="644.5" y="628.7" font-size="10.7" text-anchor="middle" fill="#000" stroke="#000" stroke-width="0.12">21</text>
<rect x="675" y="615" width="1" height="2" fill="#E00010"/>
<text x="674.5" y="628.7" font-size="10.7" text-anchor="middle" fill="#000" stroke="#000" stroke-width="0.12">28</text>
<rect x="705" y="615" width="1" height="2" fill="#E00010"/>
<text x="704.5" y="628.7" font-size="10.7" text-anchor="middle" fill="#000" stroke="#000" stroke-width="0.12">05</text>
<rect x="735" y="615" width="1" height="2" fill="#E00010"/>
<text x="734.5" y="628.7" font-size="10.7" text-anchor="middle" fill="#000" stroke="#000" stroke-width="0.12">12</text>
<rect x="765" y="615" width="1" height="2" fill="#E00010"/>
<text x="764.5" y="628.7" font-size="10.7" text-anchor="middle" fill="#000" stroke="#000" stroke-width="0.12">19</text>
<rect x="795" y="615" width="1" height="2" fill="#E00010"/>
<text x="794.5" y="628.7" font-size="10.7" text-anchor="middle" fill="#000" stroke="#000" stroke-width="0.12">26</text>
<rect x="825" y="615" width="1" height="2" fill="#E00010"/>
<text x="824.5" y="628.7" font-size="10.7" text-anchor="middle" fill="#000" stroke="#000" stroke-width="0.12">02</text>
<rect x="856" y="615" width="1" height="2" fill="#E00010"/>
<text x="855.5" y="628.7" font-size="10.7" text-anchor="middle" fill="#000" stroke="#000" stroke-width="0.12">09</text>
<rect x="890" y="615" width="1" height="2" fill="#E00010"/>
<text x="889.5" y="628.7" font-size="10.7" text-anchor="middle" fill="#000" stroke="#000" stroke-width="0.12">16</text>
<rect x="920" y="615" width="1" height="2" fill="#E00010"/>
<text x="919.5" y="628.7" font-size="10.7" text-anchor="middle" fill="#000" stroke="#000" stroke-width="0.12">23</text>
<text x="60.2" y="644" font-size="10.7" text-anchor="middle" fill="#000" stroke="#000" stroke-width="0.12">Dec/02</text>
<text x="198.8" y="644" font-size="10.7" text-anchor="middle" fill="#000" stroke="#000" stroke-width="0.12">Jan/06/14</text>
<text x="319.3" y="644" font-size="10.7" text-anchor="middle" fill="#000" stroke="#000" stroke-width="0.12">Feb/03</text>
<text x="439.8" y="644" font-size="10.7" text-anchor="middle" fill="#000" stroke="#000" stroke-width="0.12">Mar/03</text>
<text x="590.5" y="644" font-size="10.7" text-anchor="middle" fill="#000" stroke="#000" stroke-width="0.12">Apr/07</text>
<text x="705.0" y="644" font-size="10.7" text-anchor="middle" fill="#000" stroke="#000" stroke-width="0.12">May/05</text>
<text x="825.5" y="644" font-size="10.7" text-anchor="middle" fill="#000" stroke="#000" stroke-width="0.12">Jun/02</text>
</svg>
<div class="a" style="left:9px;top:656px;width:16px;height:22px;background:#F4F4F4"></div>
<div class="a" style="left:12px;top:661px;width:11px;height:11px;background:repeating-linear-gradient(90deg,#2C5C96 0 2px,#356CAA 2px 3px);box-shadow:0 0 0 0.5px #3A4858"></div>
<div class="a" style="left:26px;top:657px;width:1px;height:20px;background:#8A8A8A"></div>
<div class="a" style="left:30px;top:656px;width:148px;height:20px;background:#fff;border:1px solid #ABADB3"></div>
<svg class="a" style="left:0;top:650px" width="60" height="30"><circle cx="39.4" cy="14.1" r="3" fill="none" stroke="#333" stroke-width="1.2"/><line x1="37.2" y1="16.4" x2="33.5" y2="20.3" stroke="#333" stroke-width="1.5"/><rect x="40" y="21.3" width="1" height="1" fill="#444"/><rect x="42" y="21.3" width="1" height="1" fill="#444"/><rect x="44" y="21.3" width="1" height="1" fill="#444"/></svg>
<div class="a" style="left:51.5px;top:660.6px;font-size:11px;color:#6A6A78;white-space:nowrap">Search for instrument</div>
<div class="a" style="left:198px;top:657px;width:1px;height:20px;background:#8A8A8A"></div>
<div class="a" style="left:202.5px;top:659.6px;font-size:12.1px;letter-spacing:-0.13px;font-weight:bold;color:#111;white-space:nowrap">08 Jun 2014 19:00:00 EDT</div>
</body></html>
